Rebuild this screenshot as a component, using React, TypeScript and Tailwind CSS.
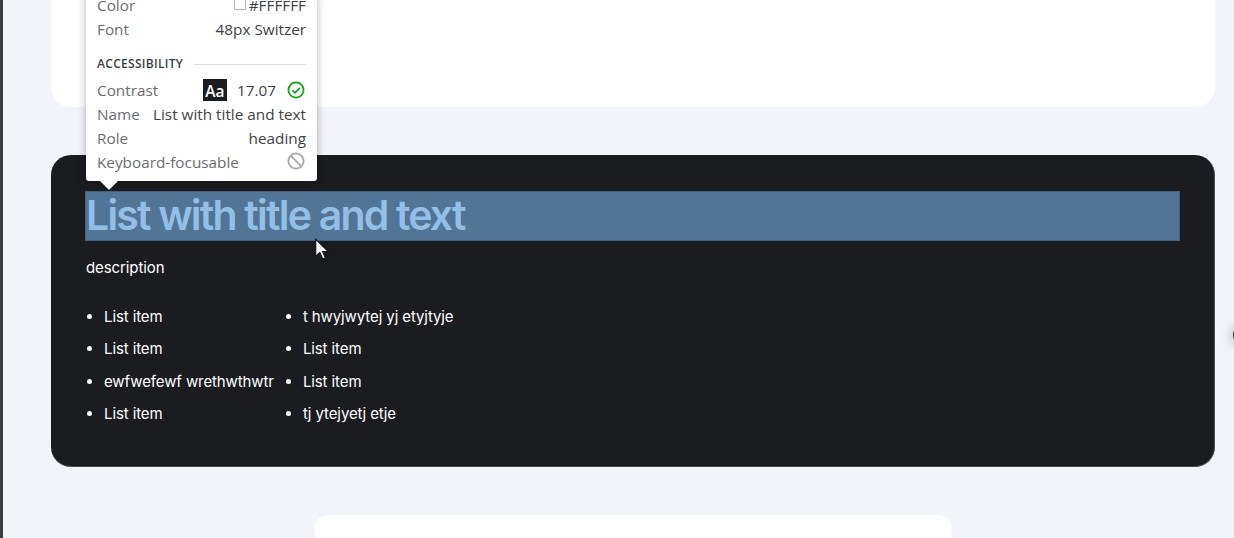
import React from "react";

const sans = "font-['Inter','Liberation_Sans',sans-serif]";
const ui = "font-['Open_Sans','Noto_Sans',sans-serif]";

function Row({ label, children, className = "" }: { label: string; children: React.ReactNode; className?: string }) {
  return (
    <div className={`flex h-6 items-center justify-between ${className}`}>
      <span className="text-[#6a6d72]">{label}</span>
      <span className="flex items-center text-[#3f4247]">{children}</span>
    </div>
  );
}

function Tooltip() {
  return (
    <div className={`absolute left-[86px] top-[-7px] z-10 w-[231px] rounded-b-[3px] bg-white px-[11px] pb-[7px] text-[15.3px] leading-6 shadow-[0_2px_8px_rgba(0,0,0,0.3)] ${ui}`}>
      <Row label="Color">
        <span className="mr-[3px] h-[12px] w-[12px] -translate-y-[1px] border border-[#b5b5b5] bg-white" />
        #FFFFFF
      </Row>
      <Row label="Font">48px Switzer</Row>
      <div className="mb-[2px] mt-[11px] flex h-6 items-center gap-[11px]">
        <span className="text-[12px] font-semibold tracking-[0.3px] text-[#3c3f44]">ACCESSIBILITY</span>
        <span className="h-px flex-1 bg-[#dcdcdc]" />
      </div>
      <Row label="Contrast">
        <span className="mr-[10px] flex h-[22px] w-6 items-center justify-center bg-[#1b1c20] pt-[2px] text-[15.5px] font-semibold text-white">Aa</span>
        <span className="mr-[11px]">17.07</span>
        <svg className="mr-[1px]" width="18" height="18" viewBox="0 0 18 18" fill="none" stroke="#0ca40c" strokeWidth="1.7">
          <circle cx="9" cy="9" r="7.6" />
          <path d="M5.4 9.3l2.6 2.5 4.8-5" />
        </svg>
      </Row>
      <Row label="Name">List with title and text</Row>
      <Row label="Role">heading</Row>
      <Row label="Keyboard-focusable">
        <svg className="mr-[1px] -translate-y-[1px]" width="18" height="18" viewBox="0 0 18 18" fill="none" stroke="#a8a8a8" strokeWidth="1.8">
          <circle cx="9" cy="9" r="7.6" />
          <path d="M3.8 3.8l10.4 10.4" />
        </svg>
      </Row>
      <span className="absolute left-[14px] top-full h-0 w-0 border-x-[9px] border-t-[9px] border-x-transparent border-t-white" />
    </div>
  );
}

function ListColumn({ items }: { items: string[] }) {
  return (
    <ul className="flex list-disc flex-col gap-[11.4px] pl-[18px] marker:text-white">
      {items.map((t, i) => (
        <li key={i} className="h-[21px] whitespace-nowrap leading-[21px]">{t}</li>
      ))}
    </ul>
  );
}

export default function App() {
  return (
    <div className="relative h-[538px] w-[1234px] overflow-hidden bg-[#f3f4f9]">
      <div className="flex h-full">
        <div className="h-full w-[3px] shrink-0 bg-[#3b3b3b]" />
        <main className="flex flex-1 flex-col items-center pl-[48px] pr-[19px]">
          <div className="h-[107px] w-full shrink-0 rounded-b-[20px] bg-white" />
          <section className={`mt-[48px] h-[312px] w-full shrink-0 rounded-[20px] border-b border-r border-[#4a4c50] bg-[#1b1c20] pl-[34px] pr-[34px] pt-[36px] text-white ${sans}`}>
            <h2 className="h-[50px] w-full border border-[#47617a] bg-[#527596] text-[41px] font-semibold leading-[47px] tracking-[-1.8px] text-[#93bfe6]">
              List with title and text
            </h2>
            <p className="mt-[16px] pl-[1px] text-[15px] leading-[22px] tracking-[-0.1px]">description</p>
            <div className="mt-[27px] flex gap-[11px] pl-[1px] text-[15px] tracking-[-0.1px]">
              <ListColumn items={["List item", "List item", "ewfwefewf wrethwthwtr", "List item"]} />
              <ListColumn items={["t hwyjwytej yj etyjtyje", "List item", "List item", "tj ytejyetj etje"]} />
            </div>
          </section>
          <div className="mt-[48px] h-[40px] w-[637px] shrink-0 -translate-x-[0.5px] rounded-t-[14px] bg-white" />
        </main>
      </div>
      <Tooltip />
      <svg className="absolute left-[314px] top-[238px] z-20" width="16" height="22" viewBox="0 0 14 19">
        <path d="M1.5 1v15l3.6-3.4 2.5 5.6 2.4-1-2.5-5.5h5z" fill="#fff" stroke="#111" strokeWidth="1" />
      </svg>
      <div className="absolute left-[1233px] top-[325px] h-[20px] w-[20px] rounded-full bg-[#333] shadow-[0_0_14px_rgba(0,0,0,0.3)]" />
    </div>
  );
}
